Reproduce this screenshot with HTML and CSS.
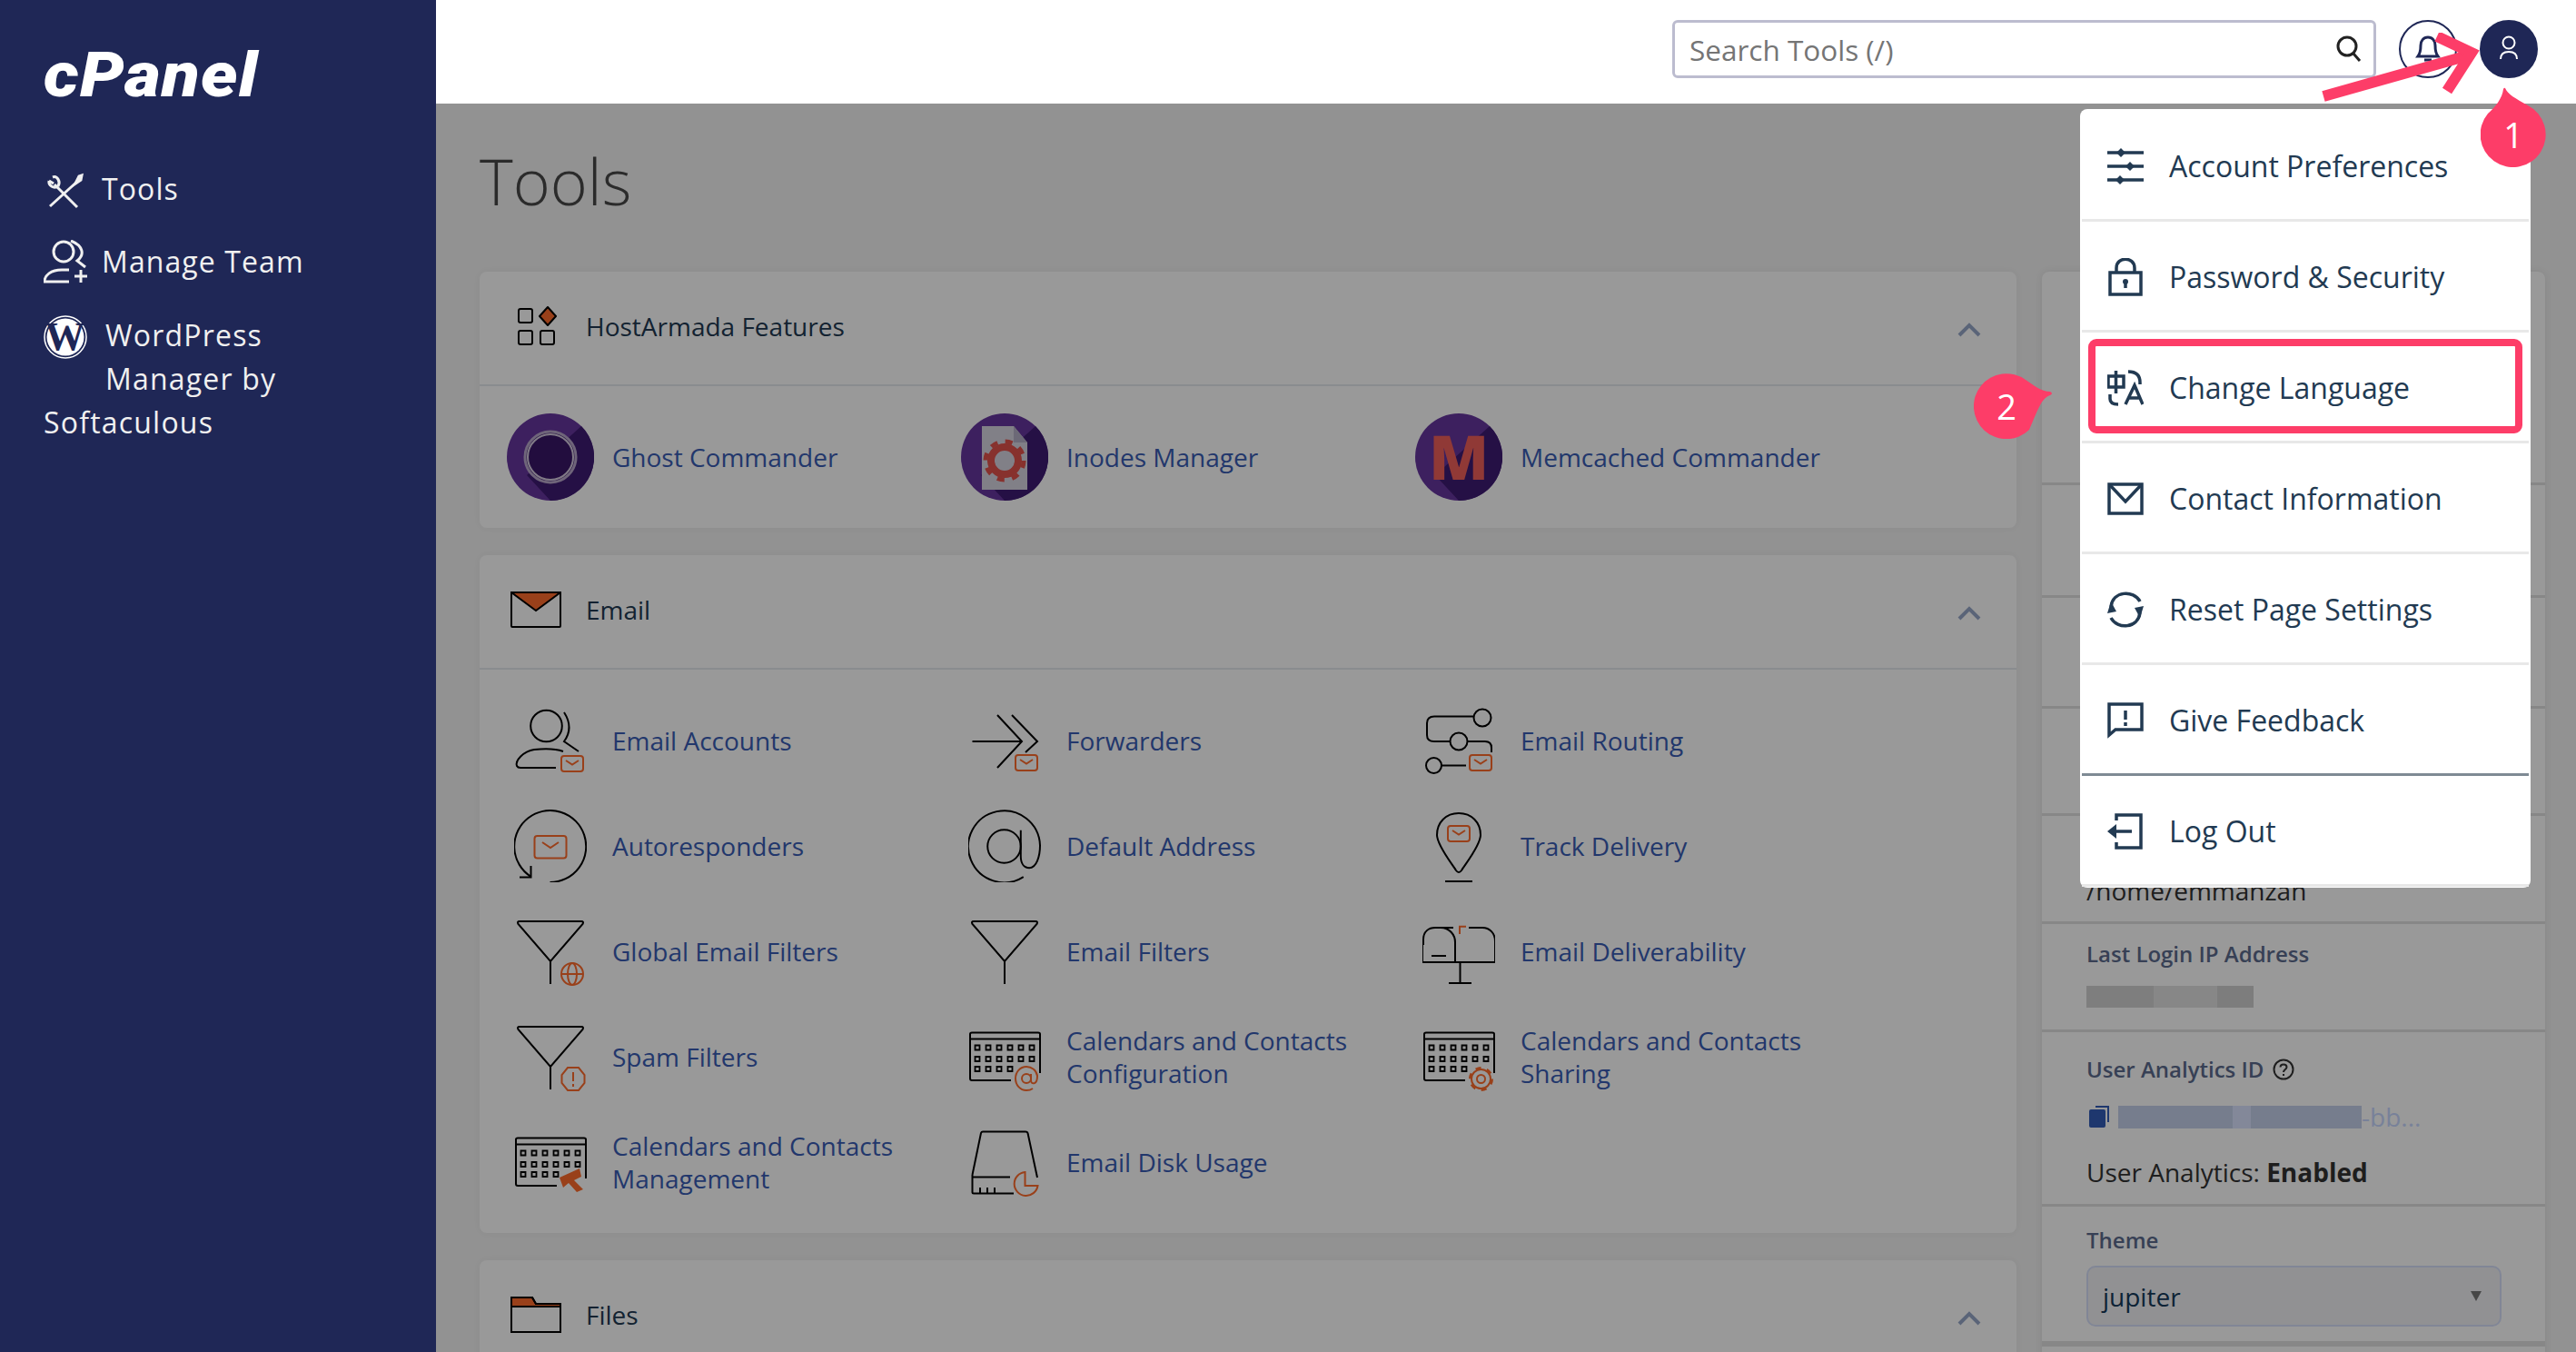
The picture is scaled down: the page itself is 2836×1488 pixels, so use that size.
FILE: index.html
```html
<!DOCTYPE html>
<html>
<head>
    <meta charset="utf-8" />
    <meta name="viewport" content="width=device-width" />
    <title>cPanel - Tools</title>
    <link rel="stylesheet" href="styles.css">
</head>
<body>
    <svg class="defs" width="0" height="0">
        <defs>
            <g id="mail">
                <rect x="0" y="0" width="24" height="17" rx="3" />
                <path d="M5,5 L12,9.5 L19,5" />
            </g>
            <g id="calendar">
                <path d="M79,58 V15 Q79,13.5 77,13.5 H4 Q2,13.5 2,15 V64 Q2,66 4,66 H47 M2,20.5 H79" />
                <path d="M7.5,27.5h5v5h-5z m12,0h5v5h-5z m12,0h5v5h-5z m12,0h5v5h-5z m12,0h5v5h-5z m12,0h5v5h-5z M7.5,40h5v5h-5z m12,0h5v5h-5z m12,0h5v5h-5z m12,0h5v5h-5z m12,0h5v5h-5z m12,0h5v5h-5z M7.5,51h5v5h-5z m12,0h5v5h-5z m12,0h5v5h-5z m12,0h5v5h-5z" stroke-width="1.8" />
            </g>
            <path id="funnel" d="M6,7 H74 Q77,7 75.5,10 L40,51 L4.5,10 Q3,7 6,7 Z M40,51 V76" />
        </defs>
    </svg>

    <aside class="sidebar">
        <div class="logo">cPanel</div>
        <nav class="side-nav">
            <a class="side-item">
                <svg class="side-icon" width="48" height="48" viewBox="0 0 48 48">
                    <path d="M12,19 L37,44 M39,14 L7,43" />
                    <path d="M6,15 C5,20 11,24 16,21 M6,15 L11,18 M16,21 C19,16 15,9 10,11" />
                    <path d="M35,18 L39,10 L42,9 L41,14 Z" class="side-fill" />
                </svg>
                <span>Tools</span>
            </a>
            <a class="side-item">
                <svg class="side-icon" width="48" height="48" viewBox="0 0 48 48">
                    <circle cx="22" cy="13" r="11" />
                    <path d="M30,1 C43,6 46,16 37,23 L46,30" />
                    <path d="M28,33 H20 C8,33 1,39 1,46 H28 M41,33 V47 M34,40 H48" />
                </svg>
                <span>Manage Team</span>
            </a>
            <a class="side-item side-wrap">
                <svg class="side-wp" width="48" height="48" viewBox="0 0 48 48">
                    <circle cx="24" cy="24" r="23" fill="none" stroke="#fff" stroke-width="1.5" />
                    <circle cx="24" cy="24" r="20.5" fill="#fff" />
                    <text x="24" y="38" text-anchor="middle" class="wp-letter">W</text>
                </svg>
                <span class="wp-top">WordPress<br>Manager by</span>
                <span class="wp-bottom">Softaculous</span>
            </a>
        </nav>
    </aside>

    <header class="topbar">
        <div class="search">
            <span>Search Tools (/)</span>
            <svg width="30" height="30" viewBox="0 0 30 30">
                <circle cx="13" cy="12" r="10" />
                <path d="M20,20 L27,28" />
            </svg>
        </div>
        <button class="round-btn bell-btn">
            <svg width="34" height="34" viewBox="0 0 34 34">
                <path d="M6,25 C9,21 9,17 9,13 C9,8 12,4 17,4 C22,4 25,8 25,13 C25,17 25,21 28,25 Z M13,29 H21" />
            </svg>
        </button>
        <button class="round-btn user-btn">
            <svg width="32" height="32" viewBox="0 0 32 32">
                <circle cx="16" cy="9" r="6.5" />
                <path d="M7,27 C7,21 11,19 16,19 C21,19 25,21 25,27" />
            </svg>
        </button>
    </header>

    <main class="content">
        <h1>Tools</h1>
        <div class="columns">
            <div class="tool-column">
                <section class="card">
                    <div class="card-head">
                        <span class="head-icon">
                            <svg class="line-icon" width="56" height="44" viewBox="0 0 56 44">
                                <rect x="9" y="3" width="15" height="15" rx="2" />
                                <rect x="9" y="27" width="15" height="15" rx="2" />
                                <rect x="33" y="27" width="15" height="15" rx="2" />
                                <path class="fill-orange" d="M41,1 L50,11 L41,21 L32,11 Z" stroke-linejoin="round" />
                            </svg>
                        </span>
                        <span class="head-title">HostArmada Features</span>
                        <svg class="chevron" width="26" height="16" viewBox="0 0 26 16"><path d="M2,14 L13,3 L24,14" /></svg>
                    </div>
                    <div class="tool-grid">
                        <a class="tool">
                            <span class="tool-icon">
                                <svg width="96" height="96" viewBox="0 0 96 96">
                                    <circle cx="48" cy="48" r="48" fill="#67369f" />
                                    <path d="M82,14 A48,48 0 0 1 48,96 L22,68 Z" fill="#3f1c73" />
                                    <circle cx="48" cy="48" r="28" fill="#3a1768" stroke="#b9a8cc" stroke-width="3" />
                                    <circle cx="48" cy="48" r="25" fill="none" stroke="#d8cde2" stroke-width="2" />
                                </svg>
                            </span>
                            <span class="tool-name">Ghost Commander</span>
                        </a>
                        <a class="tool">
                            <span class="tool-icon">
                                <svg width="96" height="96" viewBox="0 0 96 96">
                                    <circle cx="48" cy="48" r="48" fill="#67369f" />
                                    <path d="M82,14 A48,48 0 0 1 48,96 L22,68 Z" fill="#3f1c73" />
                                    <path d="M23,14 H58 L73,32 V84 H23 Z" fill="#d8d6e2" />
                                    <path d="M58,14 L73,32 H58 Z" fill="#b5b0c6" />
                                    <circle cx="48" cy="52" r="15" fill="none" stroke="#e2524c" stroke-width="8" />
                                    <circle cx="48" cy="52" r="21" fill="none" stroke="#e2524c" stroke-width="5" stroke-dasharray="8 8.5" />
                                </svg>
                            </span>
                            <span class="tool-name">Inodes Manager</span>
                        </a>
                        <a class="tool">
                            <span class="tool-icon">
                                <svg width="96" height="96" viewBox="0 0 96 96">
                                    <circle cx="48" cy="48" r="48" fill="#67369f" />
                                    <path d="M82,14 A48,48 0 0 1 48,96 L22,68 Z" fill="#3f1c73" />
                                    <text x="48" y="73" text-anchor="middle" class="memcached-letter">M</text>
                                </svg>
                            </span>
                            <span class="tool-name">Memcached Commander</span>
                        </a>
                    </div>
                </section>

                <section class="card">
                    <div class="card-head">
                        <span class="head-icon">
                            <svg class="line-icon" width="56" height="40" viewBox="0 0 56 40">
                                <path class="fill-orange" d="M1,1 H55 L28,21 Z" />
                                <rect x="1" y="1" width="54" height="38" rx="1" />
                            </svg>
                        </span>
                        <span class="head-title">Email</span>
                        <svg class="chevron" width="26" height="16" viewBox="0 0 26 16"><path d="M2,14 L13,3 L24,14" /></svg>
                    </div>
                    <div class="tool-grid">
                        <a class="tool">
                            <span class="tool-icon">
                                <svg class="line-icon" width="80" height="80" viewBox="0 0 80 80">
                                    <circle cx="35.5" cy="24" r="17.3" />
                                    <path d="M55,9 Q66,26 55,41 L71,52" />
                                    <path d="M54,52 C46,49 32,49 22,50 C10,52 1,62 3,68 Q4,70 7,70 H46" />
                                    <use href="#mail" x="52" y="57" class="orange" />
                                </svg>
                            </span>
                            <span class="tool-name">Email Accounts</span>
                        </a>
                        <a class="tool">
                            <span class="tool-icon">
                                <svg class="line-icon" width="80" height="80" viewBox="0 0 80 80">
                                    <path d="M4.5,41 H59 M32,12 L59,41 L32,70 M48,12 L76,41 L63,53" />
                                    <use href="#mail" x="52" y="56" class="orange" />
                                </svg>
                            </span>
                            <span class="tool-name">Forwarders</span>
                        </a>
                        <a class="tool">
                            <span class="tool-icon">
                                <svg class="line-icon" width="80" height="80" viewBox="0 0 80 80">
                                    <circle cx="66" cy="15" r="9.5" />
                                    <path d="M56.5,13.5 H13 Q5,13.5 5,21 V34 Q5,41 13,41 H30.5" />
                                    <circle cx="40" cy="41" r="9.5" />
                                    <path d="M49.5,41 H69 Q76,41 76,48 V53" />
                                    <circle cx="12.5" cy="67.5" r="8.5" />
                                    <path d="M21,67.5 H48" />
                                    <use href="#mail" x="52" y="56" class="orange" />
                                </svg>
                            </span>
                            <span class="tool-name">Email Routing</span>
                        </a>
                        <a class="tool">
                            <span class="tool-icon">
                                <svg class="line-icon" width="80" height="80" viewBox="0 0 80 80">
                                    <path d="M39.5,80 A39.5,39.5 0 1 0 18,73.5 M18.5,62 V74.5 H6" />
                                    <rect class="orange" x="22.5" y="29" width="35" height="24.5" rx="3" />
                                    <path class="orange" d="M31,36 L40,42 L49,36" />
                                </svg>
                            </span>
                            <span class="tool-name">Autoresponders</span>
                        </a>
                        <a class="tool">
                            <span class="tool-icon">
                                <svg class="line-icon" width="80" height="80" viewBox="0 0 81 81">
                                    <circle cx="40" cy="41" r="18.5" />
                                    <path d="M58.5,23 V52 C58.5,60 62,65 68,65 C76,65 80,52 80,40 A40,40 0 1 0 61.5,75" />
                                </svg>
                            </span>
                            <span class="tool-name">Default Address</span>
                        </a>
                        <a class="tool">
                            <span class="tool-icon">
                                <svg class="line-icon" width="80" height="82" viewBox="0 0 80 82">
                                    <path d="M40,5 C26,5 16,15 16,29 C16,40 32,60 37,68 Q40,72 43,68 C48,60 64,40 64,29 C64,15 54,5 40,5 Z M25,80 H55" />
                                    <use href="#mail" x="28" y="19" class="orange" />
                                </svg>
                            </span>
                            <span class="tool-name">Track Delivery</span>
                        </a>
                        <a class="tool">
                            <span class="tool-icon">
                                <svg class="line-icon" width="80" height="80" viewBox="0 0 80 80">
                                    <use href="#funnel" />
                                    <g class="orange">
                                        <circle cx="64" cy="65" r="12" />
                                        <ellipse cx="64" cy="65" rx="5" ry="12" />
                                        <path d="M52,65 H76" />
                                    </g>
                                </svg>
                            </span>
                            <span class="tool-name">Global Email Filters</span>
                        </a>
                        <a class="tool">
                            <span class="tool-icon">
                                <svg class="line-icon" width="80" height="80" viewBox="0 0 80 80"><use href="#funnel" /></svg>
                            </span>
                            <span class="tool-name">Email Filters</span>
                        </a>
                        <a class="tool">
                            <span class="tool-icon">
                                <svg class="line-icon" width="80" height="80" viewBox="0 0 80 80">
                                    <path d="M1,33 V27 C1,18 7,14 14,14 H34 M51,14 H66 C74,14 80,20 80,29 V52 H0 V33 M20,14 C30,14 36,22 36,30 V52 M10,45 H26 M41.5,52 V75 M29,75 H54" />
                                    <path class="orange" d="M41,21 V12.7 H48" />
                                </svg>
                            </span>
                            <span class="tool-name">Email Deliverability</span>
                        </a>
                        <a class="tool">
                            <span class="tool-icon">
                                <svg class="line-icon" width="80" height="80" viewBox="0 0 80 80">
                                    <use href="#funnel" />
                                    <path class="orange" d="M59,52 H71 L77.5,60 V69 L71,77 H59 L52.5,69 V60 Z M65,57 V67 M65,70 V73" />
                                </svg>
                            </span>
                            <span class="tool-name">Spam Filters</span>
                        </a>
                        <a class="tool">
                            <span class="tool-icon">
                                <svg class="line-icon" width="80" height="80" viewBox="0 0 80 80">
                                    <use href="#calendar" />
                                    <circle class="orange" cx="64" cy="64" r="5" />
                                    <path class="orange" d="M69,59 V66 Q69,70 73,69 C76,68 76,63 76,61 C75,55 70,51 64,51 C57,51 52,57 52,64 C52,71 57,77 64,77 Q68,77 71,75" />
                                </svg>
                            </span>
                            <span class="tool-name">Calendars and Contacts Configuration</span>
                        </a>
                        <a class="tool">
                            <span class="tool-icon">
                                <svg class="line-icon" width="80" height="80" viewBox="0 0 80 80">
                                    <use href="#calendar" />
                                    <circle class="orange" cx="64.5" cy="64.5" r="4.5" />
                                    <circle class="orange" cx="64.5" cy="64.5" r="10.5" />
                                    <circle class="orange" cx="64.5" cy="64.5" r="12" stroke-width="3" stroke-dasharray="6 6.55" />
                                </svg>
                            </span>
                            <span class="tool-name">Calendars and Contacts Sharing</span>
                        </a>
                        <a class="tool">
                            <span class="tool-icon">
                                <svg class="line-icon" width="80" height="80" viewBox="0 0 80 80">
                                    <use href="#calendar" />
                                    <path class="fill-solid" d="M50,57 L72,47 L74,56 L66,60 L76,70 L69,73 L60,63 L54,68 Z" />
                                </svg>
                            </span>
                            <span class="tool-name">Calendars and Contacts Management</span>
                        </a>
                        <a class="tool">
                            <span class="tool-icon">
                                <svg class="line-icon" width="80" height="80" viewBox="0 0 80 80">
                                    <path d="M4.5,54 L14,8 Q14.5,6.5 16,6.5 H63 Q65,6.5 65.5,8 L76,57 M4.5,54 V73 Q4.5,74.5 6,74.5 H50 M4.5,56.5 H46 M13,68 V74 M21,68 V74 M29,68 V74" />
                                    <path class="orange" d="M62.5,51 A13,13 0 1 0 76.5,66 H62.5 Z" />
                                </svg>
                            </span>
                            <span class="tool-name">Email Disk Usage</span>
                        </a>
                    </div>
                </section>

                <section class="card">
                    <div class="card-head">
                        <span class="head-icon">
                            <svg class="line-icon" width="56" height="40" viewBox="0 0 56 40">
                                <path class="fill-orange" d="M1,1 H24 L28,8 H55 V11 H1 Z" />
                                <path d="M1,1 H24 L28,8 H55 V39 H1 Z" />
                            </svg>
                        </span>
                        <span class="head-title">Files</span>
                        <svg class="chevron" width="26" height="16" viewBox="0 0 26 16"><path d="M2,14 L13,3 L24,14" /></svg>
                    </div>
                </section>
            </div>

            <aside class="info-card">
                <div class="info-row row-first"></div>
                <div class="info-row row-a"></div>
                <div class="info-row row-b"></div>
                <div class="info-row row-c"></div>
                <div class="info-row row-home"><span class="info-value">/home/emmanzan</span></div>
                <div class="info-row row-login">
                    <div class="info-label">Last Login IP Address</div>
                    <div class="blur-bar">
                        <i class="blur-a"></i><i class="blur-b"></i><i class="blur-c"></i>
                    </div>
                </div>
                <div class="info-row row-analytics">
                    <div class="info-label">
                        User Analytics ID
                        <svg class="help" width="24" height="24" viewBox="0 0 24 24">
                            <circle cx="12" cy="12" r="10.5" />
                            <path d="M8.5,9.5 C8.5,5.5 15.5,5.5 15.5,9.5 C15.5,12 12,12 12,15 M12,17 V19" />
                        </svg>
                    </div>
                    <div class="analytics-id">
                        <svg width="22" height="24" viewBox="0 0 22 24">
                            <path d="M7,0 H22 V18 H20 V2 H7 Z" fill="#325cb7" />
                            <rect x="0" y="4" width="18" height="20" rx="2" fill="#325cb7" />
                        </svg>
                        <span class="blur-bar blur-blue">
                            <i class="blur-d"></i><i class="blur-e"></i><i class="blur-f"></i>
                        </span>
                        <span class="id-tail">-bb...</span>
                    </div>
                    <div class="info-value">User Analytics: <b>Enabled</b></div>
                </div>
                <div class="info-row row-theme">
                    <div class="info-label">Theme</div>
                    <div class="select">
                        <span>jupiter</span>
                        <i class="select-arrow"></i>
                    </div>
                </div>
                <div class="info-row"></div>
            </aside>
        </div>
    </main>

    <div class="dim"></div>

    <ul class="user-menu">
        <li>
            <svg width="40" height="40" viewBox="0 0 40 40">
                <path d="M0,5 H40 M0,20 H40 M0,35 H40" />
                <path class="menu-solid" d="M15,0 L20,5 L15,10 L10,5 Z M25,15 L30,20 L25,25 L20,20 Z M14,30 L19,35 L14,40 L9,35 Z" />
            </svg>
            Account Preferences
        </li>
        <li>
            <svg width="40" height="42" viewBox="0 0 40 42">
                <rect x="3" y="16" width="34" height="24" />
                <path d="M10,16 V11 C10,-2 30,-2 30,11 V16" />
                <circle class="menu-solid" cx="20" cy="26" r="3" />
                <path d="M20,26 V33" />
            </svg>
            Password &amp; Security
        </li>
        <li>
            <svg width="40" height="40" viewBox="0 0 40 40">
                <path d="M1,7 H18 V19 H1 Z M9.5,1 V26" />
                <path d="M23,2 C32,2 36,6 36,14 M36,14 V16 M3,27 V32 C3,36 6,38 12,38" />
                <path d="M20,38 L30,17 L39,38 M23.5,31 H36" />
            </svg>
            Change Language
        </li>
        <li>
            <svg width="40" height="36" viewBox="0 0 40 36">
                <rect x="2" y="2" width="36" height="32" />
                <path d="M3,3 L20,21 L37,3" />
            </svg>
            Contact Information
        </li>
        <li>
            <svg width="40" height="40" viewBox="0 0 40 40">
                <path d="M4,17 C6,-1 29,-2 36,11" />
                <path d="M36,23 C34,41 11,42 4,29" />
                <path class="menu-solid" d="M4,11 L0,24 L10,22 Z M36,29 L40,16 L30,18 Z" />
            </svg>
            Reset Page Settings
        </li>
        <li>
            <svg width="40" height="40" viewBox="0 0 40 40">
                <path d="M2,2 H38 V30 H9 L2,36 Z" />
                <path d="M20,9 V19 M20,22 V26" />
            </svg>
            Give Feedback
        </li>
        <li>
            <svg width="40" height="40" viewBox="0 0 40 40">
                <path d="M10,8 V2 H37 V38 H10 V32 M10,20 H27" />
                <path class="menu-solid" d="M0,20 L10,12 V28 Z" />
            </svg>
            Log Out
        </li>
    </ul>

    <!-- tutorial markup painted over the screenshot -->
    <div class="highlight"></div>
    <svg class="arrow" width="180" height="80" viewBox="0 0 180 80">
        <path d="M2,70 L165,24" />
        <path d="M127,4 L165,22 L138,64" />
    </svg>
    <div class="badge badge-one">
        <svg width="72" height="88" viewBox="0 0 72 88">
            <path d="M27,1 C30,8 38,12 52,20 A36,36 0 1 1 8,29 C16,22 24,12 25,2 Q26,0 27,1 Z" />
        </svg>
        <span>1</span>
    </div>
    <div class="badge badge-two">
        <svg width="90" height="72" viewBox="0 0 90 72">
            <path d="M57,7 C66,13 74,20 84,20 Q88,22 84,24 C74,27 70,42 61,62 A36,36 0 1 1 57,7 Z" />
        </svg>
        <span>2</span>
    </div>
</body>
</html>
```
FILE: styles.css
```css
* {
  box-sizing: border-box;
}

html,
body {
  margin: 0;
  height: 1488px;
  overflow: hidden;
}

body {
  display: grid;
  grid-template-columns: 480px 1fr;
  grid-template-rows: 114px 1fr;
  font-family: "Open Sans", "Liberation Sans", sans-serif;
  background: #f3f3f3;
  color: #333;
}

.defs {
  position: absolute;
}

/* sidebar */
.sidebar {
  grid-row: 1 / 3;
  background: #1f2756;
  color: #f0f0f0;
  padding-left: 48px;
}

.logo {
  height: 184px;
  padding-top: 41px;
  font-family: Roboto, sans-serif;
  font-weight: 900;
  font-style: italic;
  font-size: 68px;
  line-height: 84px;
  letter-spacing: 1px;
  color: #fff;
  transform: scaleX(1.13);
  transform-origin: left;
}

.side-nav {
  display: flex;
  flex-direction: column;
  gap: 32px;
}

.side-item {
  display: flex;
  align-items: center;
  gap: 16px;
  font-size: 32px;
  line-height: 48px;
  letter-spacing: 1.1px;
}

.side-wrap {
  flex-wrap: wrap;
  align-items: flex-start;
  gap: 0 20px;
  margin-top: 1px;
  letter-spacing: 1.2px;
}

.wp-top {
  width: 300px;
}

.wp-bottom {
  width: 100%;
}

.side-icon {
  fill: none;
  stroke: #f0f0f0;
  stroke-width: 3;
  flex: none;
}

.side-fill {
  fill: #f0f0f0;
}

.side-wp {
  flex: none;
  margin-top: 2px;
}

.wp-letter {
  font-family: "Liberation Serif", serif;
  font-weight: 700;
  font-size: 44px;
  fill: #1f2756;
}

/* top bar */
.topbar {
  display: flex;
  justify-content: flex-end;
  align-items: flex-start;
  gap: 25px;
  padding: 22px 42px 0 0;
  background: #fff;
}

.search {
  display: flex;
  align-items: center;
  justify-content: space-between;
  width: 775px;
  height: 64px;
  padding: 0 12px 0 16px;
  border: 3px solid #bcbccf;
  border-radius: 6px;
  font-size: 31.5px;
  color: #757575;
}

.search svg {
  fill: none;
  stroke: #222;
  stroke-width: 3;
}

.round-btn {
  display: flex;
  align-items: center;
  justify-content: center;
  width: 64px;
  height: 64px;
  padding: 0;
  border: 2px solid #1f2756;
  border-radius: 50%;
  background: #fff;
}

.round-btn svg {
  fill: none;
  stroke: #1f2756;
  stroke-width: 3;
}

.user-btn {
  background: #1f2756;
}

.user-btn svg {
  stroke: #fff;
  stroke-width: 2;
}

/* main */
.content {
  padding: 35px 34px 0 48px;
  min-width: 0;
}

h1 {
  margin: 0 0 50px;
  font-size: 70px;
  line-height: 100px;
  font-weight: 300;
  color: #484848;
}

.columns {
  display: flex;
  gap: 28px;
}

.tool-column {
  width: 1692px;
  display: flex;
  flex-direction: column;
  gap: 30px;
}

.card {
  background: #fff;
  border-radius: 8px;
  box-shadow: 0 0 8px rgba(0, 0, 0, 0.04);
}

.card-head {
  display: flex;
  align-items: center;
  height: 126px;
  padding: 0 39px 4px 34px;
  border-bottom: 2px solid #e4e9ef;
  font-size: 28px;
  color: #223a52;
}

.head-icon {
  display: flex;
  width: 56px;
  margin-right: 27px;
}

.head-title {
  flex: 1;
}

.chevron {
  margin-top: 8px;
  fill: none;
  stroke: #96a7c8;
  stroke-width: 4;
}

.line-icon {
  fill: none;
  stroke: #000;
  stroke-width: 2;
}

.orange {
  stroke: #ff6c2c;
}

.fill-orange {
  fill: #ff6c2c;
}

.fill-solid {
  fill: #ff6c2c;
  stroke: none;
}

.tool-grid {
  display: grid;
  grid-template-columns: repeat(3, 500px);
  padding: 20px 30px;
}

.tool {
  display: flex;
  align-items: center;
  gap: 20px;
  height: 116px;
  font-size: 28px;
  line-height: 36px;
  color: #395db4;
}

.tool-icon {
  display: flex;
  flex: none;
  align-items: center;
  justify-content: center;
  width: 96px;
}

.tool-name {
  max-width: 340px;
}

.memcached-letter {
  font-family: "Open Sans", sans-serif;
  font-weight: 800;
  font-size: 68px;
  fill: #f0605a;
}

/* account panel on the right */
.info-card {
  width: 554px;
  background: #fff;
  border-radius: 8px 8px 0 0;
  box-shadow: 0 0 8px rgba(0, 0, 0, 0.08);
}

.info-row {
  padding: 0 48px 0 49px;
  border-bottom: 3px solid #e2e2e2;
}

.row-first {
  height: 235px;
}

.row-a {
  height: 124px;
}

.row-b {
  height: 122px;
}

.row-c {
  height: 118px;
}

.row-home {
  display: flex;
  align-items: flex-end;
  height: 119px;
  padding-bottom: 14px;
}

.row-login {
  height: 119px;
  padding-top: 15px;
}

.row-analytics {
  height: 192px;
  padding-top: 23px;
}

.row-theme {
  height: 151px;
  padding-top: 19px;
}

.info-label {
  display: flex;
  align-items: center;
  gap: 10px;
  font-size: 24px;
  line-height: 36px;
  font-weight: 600;
  color: #5c6c8e;
}

.info-value {
  font-size: 28px;
  line-height: 40px;
  color: #333;
}

.info-value b {
  font-weight: 700;
}

.help {
  fill: none;
  stroke: #333;
  stroke-width: 2;
}

.blur-bar {
  display: flex;
  height: 24px;
  margin-top: 17px;
}

.blur-bar i {
  display: block;
  height: 100%;
}

.blur-a {
  width: 74px;
  background: #d2d2d2;
}

.blur-b {
  width: 70px;
  background: #e1e1e1;
}

.blur-c {
  width: 40px;
  background: #d0d0d0;
}

.analytics-id {
  display: flex;
  align-items: center;
  gap: 10px;
  height: 26px;
  margin: 21px 0 28px 3px;
}

.blur-blue {
  margin-top: 0;
  height: 25px;
}

.blur-d {
  width: 126px;
  background: #c5d0eb;
}

.blur-e {
  width: 20px;
  background: #dae3ff;
}

.blur-f {
  width: 122px;
  background: #c5d0eb;
}

.id-tail {
  margin-left: -10px;
  font-size: 28px;
  color: #c8d8ff;
}

.select {
  display: flex;
  align-items: center;
  justify-content: space-between;
  width: 457px;
  height: 67px;
  margin-top: 10px;
  padding: 0 20px 0 16px;
  border: 2px solid #d8e0fa;
  border-radius: 10px;
  background: #f2f2f5;
  font-size: 28px;
  color: #15395a;
}

.select-arrow {
  border-left: 6px solid transparent;
  border-right: 6px solid transparent;
  border-top: 11px solid #777;
}

.dim {
  position: absolute;
  left: 480px;
  top: 114px;
  right: 0;
  bottom: 0;
  background: rgba(0, 0, 0, 0.4);
}

/* open dropdown */
.user-menu {
  position: absolute;
  left: 2290px;
  top: 120px;
  width: 496px;
  height: 857px;
  margin: 0;
  padding: 2px 2px 0;
  list-style: none;
  background: #fff;
  border-radius: 8px;
  font-size: 32px;
  color: #223a52;
}

.user-menu li {
  display: flex;
  align-items: center;
  gap: 28px;
  height: 122px;
  padding: 2px 0 0 28px;
  border-bottom: 3px solid #e8e8e8;
}

.user-menu li:nth-child(6) {
  border-bottom-color: #7f8a94;
}

.user-menu svg {
  flex: none;
  fill: none;
  stroke: #223a52;
  stroke-width: 3.5;
}

.user-menu .menu-solid {
  fill: #223a52;
  stroke: none;
}

/* annotations */
.highlight {
  position: absolute;
  left: 2299px;
  top: 373px;
  width: 478px;
  height: 104px;
  border: 8px solid #fd3d68;
  border-radius: 9px;
}

.arrow {
  position: absolute;
  left: 2556px;
  top: 36px;
  fill: none;
  stroke: #fd3d68;
  stroke-width: 12;
}

.badge {
  position: absolute;
  color: #fff;
  font-size: 38px;
  line-height: 72px;
  text-align: center;
}

.badge svg {
  display: block;
  fill: #fd3d68;
}

.badge span {
  position: absolute;
  left: 0;
  width: 72px;
}

.badge-one {
  left: 2731px;
  top: 96px;
}

.badge-one span {
  top: 16px;
}

.badge-two {
  left: 2173px;
  top: 411px;
}

.badge-two span {
  top: 0;
}
```
